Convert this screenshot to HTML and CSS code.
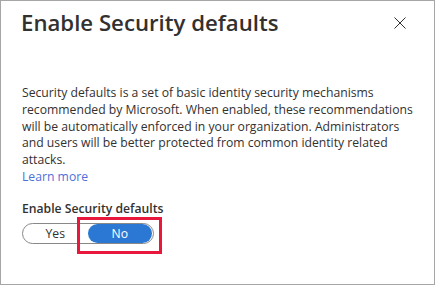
FILE: index.html
```html
<!DOCTYPE html>
<html lang="en">
<head>
<meta charset="utf-8">
<title>Enable Security defaults</title>
<link rel="stylesheet" href="styles.css">
</head>
<body>
<div class="panel">
  <div class="panel-header">
    <h1 class="panel-title">Enable Security defaults</h1>
    <button class="close-btn" aria-label="Close">
      <svg width="12" height="12" viewBox="0 0 12 12"><path d="M0.5 0.5 L11.5 11.5 M11.5 0.5 L0.5 11.5" stroke="#323130" stroke-width="1" fill="none"/></svg>
    </button>
  </div>
  <p class="description">Security defaults is a set of basic identity security mechanisms<br>recommended by Microsoft. When enabled, these recommendations<br>will be automatically enforced in your organization. Administrators<br>and users will be better protected from common identity related<br>attacks.<br><a class="learn-more" href="#">Learn more</a></p>
  <div class="field">
    <div class="field-label">Enable Security defaults</div>
    <div class="toggle-wrap">
      <div class="toggle">
        <span class="toggle-option">Yes</span>
        <span class="toggle-option is-selected">No</span>
      </div>
      <div class="highlight"></div>
    </div>
  </div>
</div>
</body>
</html>
```
FILE: styles.css
```css
html, body {
  margin: 0;
  padding: 0;
  background: #ffffff;
}
.panel {
  box-sizing: border-box;
  width: 435px;
  height: 285px;
  border: 1px solid #a6a6a6;
  padding: 0 28px 0 20px;
  font-family: "Open Sans", "Noto Sans", sans-serif;
  color: #323130;
}
.panel-header {
  display: flex;
  justify-content: space-between;
  align-items: flex-start;
  margin-top: 7px;
}
.panel-title {
  margin: 0;
  font-size: 22.2px;
  line-height: 30px;
  font-weight: 600;
  color: #323130;
}
.close-btn {
  border: 0;
  background: none;
  padding: 0;
  margin-top: 9px;
  width: 12px;
  height: 12px;
  display: flex;
}
.description {
  margin: 47px 0 0 1px;
  font-size: 12.2px;
  line-height: 16.8px;
  white-space: nowrap;
}
.learn-more {
  color: #4f6fdb;
  text-decoration: none;
}
.field {
  margin-top: 15px;
  margin-left: 1px;
}
.field-label {
  font-size: 12.2px;
  line-height: 16.8px;
  font-weight: 600;
}
.toggle-wrap {
  position: relative;
  width: 132px;
  margin-top: 5px;
}
.toggle {
  box-sizing: border-box;
  display: flex;
  width: 132px;
  height: 21px;
  border: 1px solid #8a8886;
  border-radius: 11px;
  padding: 0 1px 0 0;
}
.toggle-option {
  flex: 1 1 0;
  display: flex;
  align-items: center;
  justify-content: center;
  font-size: 12.2px;
  color: #323130;
  border-radius: 10px;
}
.toggle-option.is-selected {
  background: #2b78d4;
  color: #ffffff;
}
.highlight {
  position: absolute;
  left: 55px;
  top: -6px;
  width: 85px;
  height: 37px;
  box-sizing: border-box;
  border: 3px solid #e8183c;
}
```
